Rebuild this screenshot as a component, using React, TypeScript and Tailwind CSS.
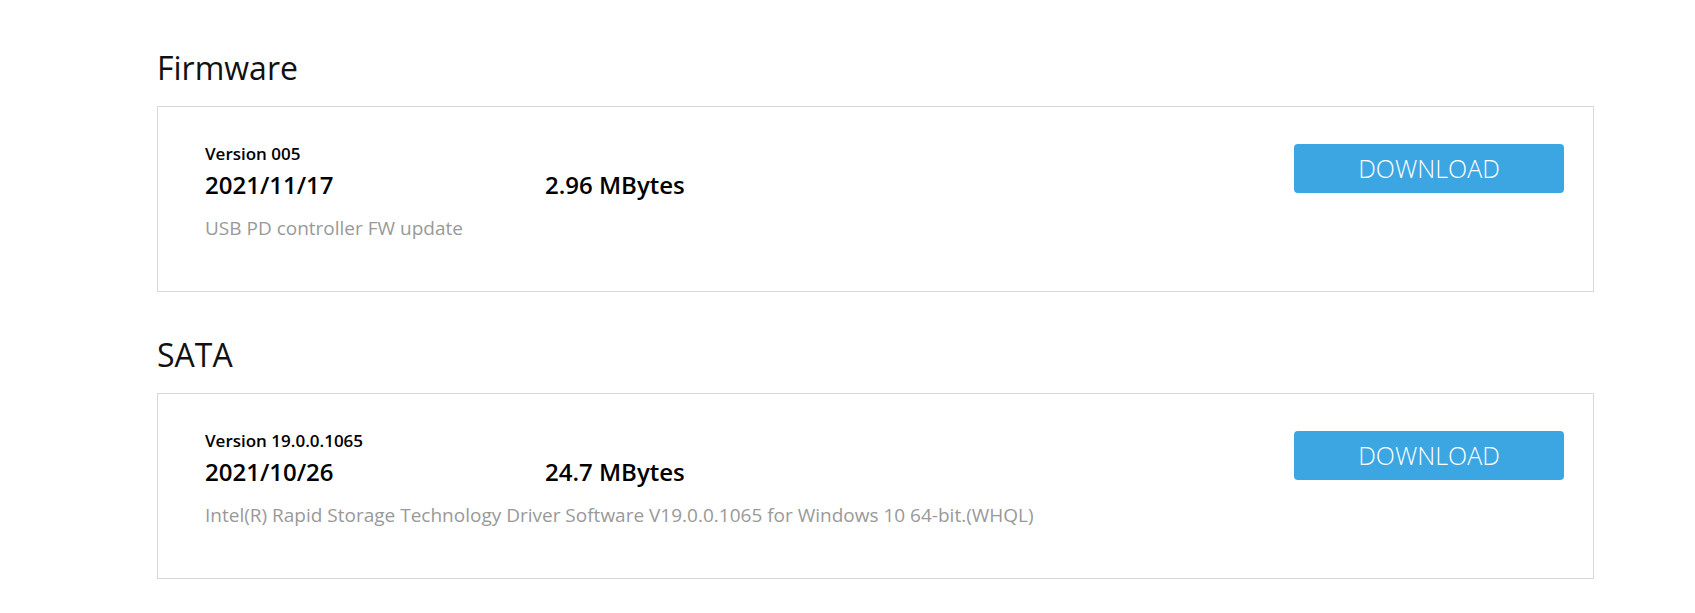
import React from 'react';

interface DownloadItem {
  version: string;
  date: string;
  size: string;
  description: string;
}

interface Section {
  title: string;
  items: DownloadItem[];
}

const sections: Section[] = [
  {
    title: 'Firmware',
    items: [
      {
        version: 'Version 005',
        date: '2021/11/17',
        size: '2.96 MBytes',
        description: 'USB PD controller FW update',
      },
    ],
  },
  {
    title: 'SATA',
    items: [
      {
        version: 'Version 19.0.0.1065',
        date: '2021/10/26',
        size: '24.7 MBytes',
        description:
          'Intel(R) Rapid Storage Technology Driver Software V19.0.0.1065 for Windows 10 64-bit.(WHQL)',
      },
    ],
  },
];

function DownloadCard({ item }: { item: DownloadItem }) {
  return (
    <div className="flex h-[186px] items-start justify-between border border-[#d9d9d9] bg-white pl-[47px] pr-[29px] pt-[37px]">
      <div className="flex flex-col">
        <span className="text-[17px] font-semibold leading-[20px] text-black">{item.version}</span>
        <div className="mt-[5px] flex text-[24px] font-semibold leading-[32px] text-black">
          <span className="w-[340px]">{item.date}</span>
          <span>{item.size}</span>
        </div>
        <p className="mt-[15px] text-[19px] leading-[24px] text-[#999999]">{item.description}</p>
      </div>
      <button className="h-[49px] w-[270px] rounded-[4px] bg-[#3ca6e3] text-[25px] font-light leading-none text-white">
        DOWNLOAD
      </button>
    </div>
  );
}

export default function App() {
  return (
    <div className="min-h-screen bg-white pl-[157px] pt-[48px] font-['Open_Sans',sans-serif]">
      <div className="flex w-[1437px] flex-col gap-[43px]">
        {sections.map((section) => (
          <section key={section.title}>
            <h2 className="mb-[18px] text-[32px] font-normal leading-[40px] text-[#111111]">{section.title}</h2>
            {section.items.map((item) => (
              <DownloadCard key={item.version} item={item} />
            ))}
          </section>
        ))}
      </div>
    </div>
  );
}
